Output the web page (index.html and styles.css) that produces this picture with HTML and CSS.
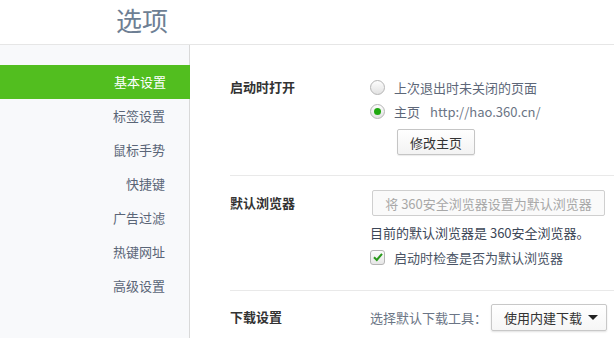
FILE: index.html
```html
<!DOCTYPE html>
<html lang="zh-CN">
<head>
    <meta charset="UTF-8">
    <title>选项</title>
    <link rel="stylesheet" href="styles.css">
</head>
<body>
    <div class="header">
        <h1 class="title">选项</h1>
    </div>

    <div class="main">
        <ul class="sidebar">
            <li class="nav-item active">基本设置</li>
            <li class="nav-item">标签设置</li>
            <li class="nav-item">鼠标手势</li>
            <li class="nav-item">快捷键</li>
            <li class="nav-item">广告过滤</li>
            <li class="nav-item">热键网址</li>
            <li class="nav-item">高级设置</li>
        </ul>

        <div class="content">
            <div class="section section-start">
                <div class="label">启动时打开</div>
                <div class="body">
                    <div class="option">
                        <span class="radio"></span>
                        <span>上次退出时未关闭的页面</span>
                    </div>
                    <div class="option">
                        <span class="radio checked"></span>
                        <span>主页</span>
                        <span class="url">http://hao.360.cn/</span>
                    </div>
                    <button class="btn btn-home">修改主页</button>
                </div>
            </div>

            <div class="section section-browser">
                <div class="label">默认浏览器</div>
                <div class="body">
                    <button class="btn btn-default" disabled>将 360安全浏览器设置为默认浏览器</button>
                    <div class="note">目前的默认浏览器是 360安全浏览器。</div>
                    <div class="option">
                        <span class="checkbox">
                            <svg width="12" height="12" viewBox="0 0 12 12">
                                <path d="M2 6.2 L4.8 9 L10 2.8" fill="none" stroke="#2a9a1c" stroke-width="2"/>
                            </svg>
                        </span>
                        <span>启动时检查是否为默认浏览器</span>
                    </div>
                </div>
            </div>

            <div class="section section-download">
                <div class="label">下载设置</div>
                <div class="body body-row">
                    <span class="hint">选择默认下载工具：</span>
                    <div class="select">
                        <span>使用内建下载</span>
                        <span class="arrow"></span>
                    </div>
                </div>
            </div>
        </div>
    </div>
</body>
</html>
```

FILE: styles.css
```css
* {
    margin: 0;
    padding: 0;
    box-sizing: border-box;
}

body {
    font-family: "Noto Sans CJK SC", "Liberation Sans", sans-serif;
    font-size: 13px;
    color: #333;
    background: #fff;
    width: 614px;
    height: 338px;
    overflow: hidden;
}

.header {
    height: 45px;
    border-bottom: 1px solid #e6e6e6;
}

.title {
    width: 190px;
    padding-right: 22px;
    text-align: right;
    font-size: 26px;
    font-weight: normal;
    line-height: 40px;
    color: #6e7f94;
}

.main {
    display: flex;
    height: 293px;
}

.sidebar {
    list-style: none;
    width: 190px;
    flex-shrink: 0;
    padding-top: 20px;
    background: #f8f9fb;
    border-right: 1px solid #d9d9d9;
}

.nav-item {
    height: 34px;
    line-height: 34px;
    text-align: right;
    padding-right: 24px;
    color: #5a6577;
    font-size: 13px;
}

.nav-item.active {
    background: #52be1f;
    color: #fff;
    margin-right: -1px;
}

.content {
    flex: 1;
    padding-left: 40px;
}

.section {
    display: flex;
    border-bottom: 1px solid #e9e9e9;
}

.section-start {
    padding: 30px 0 20px;
}

.section-browser {
    padding: 14px 0 21px;
}

.section-download {
    border-bottom: none;
    padding-top: 13px;
}

.label {
    width: 140px;
    flex-shrink: 0;
    font-weight: bold;
    color: #333;
    line-height: 26px;
}

.section-start .label {
    line-height: 24px;
}

.option {
    display: flex;
    align-items: center;
    height: 24px;
    color: #5d6778;
}

.radio {
    width: 15px;
    height: 15px;
    border-radius: 50%;
    border: 1px solid #b5b5b5;
    background: linear-gradient(#fdfdfd, #e2e2e2);
    margin-right: 9px;
    display: flex;
    align-items: center;
    justify-content: center;
}

.radio.checked::after {
    content: "";
    width: 7px;
    height: 7px;
    border-radius: 50%;
    background: #1fa80f;
}

.url {
    margin-left: 10px;
    color: #6b7585;
}

.btn {
    font-family: inherit;
    font-size: 13px;
    height: 26px;
    border: 1px solid #c5c5c5;
    border-radius: 2px;
    background: linear-gradient(#ffffff, #f3f3f3);
    color: #333;
    cursor: pointer;
}

.btn-home {
    width: 78px;
    margin: 6px 0 0 27px;
    box-shadow: 0 1px 1px rgba(0, 0, 0, 0.08);
}

.btn-default {
    width: 233px;
    margin-left: 2px;
    color: #a8a8a8;
    background: #fafafa;
    border-color: #cfcfcf;
    cursor: default;
}

.note {
    margin-top: 5px;
    line-height: 24px;
    color: #3c4656;
}

.section-browser .option {
    color: #4a5465;
}

.checkbox {
    width: 15px;
    height: 15px;
    border: 1px solid #b5b5b5;
    border-radius: 3px;
    background: linear-gradient(#fdfdfd, #e6e6e6);
    margin-right: 9px;
    display: flex;
    align-items: center;
    justify-content: center;
}

.body-row {
    display: flex;
    align-items: center;
}

.hint {
    color: #6b7585;
}

.select {
    display: flex;
    align-items: center;
    justify-content: space-between;
    width: 116px;
    height: 27px;
    margin-left: 4px;
    padding: 0 8px 0 12px;
    border: 1px solid #c8c8c8;
    border-radius: 2px;
    background: linear-gradient(#ffffff, #f6f6f6);
    box-shadow: 0 1px 2px rgba(0, 0, 0, 0.12);
    color: #333;
}

.arrow {
    width: 0;
    height: 0;
    border-left: 5px solid transparent;
    border-right: 5px solid transparent;
    border-top: 5px solid #222;
}
```
